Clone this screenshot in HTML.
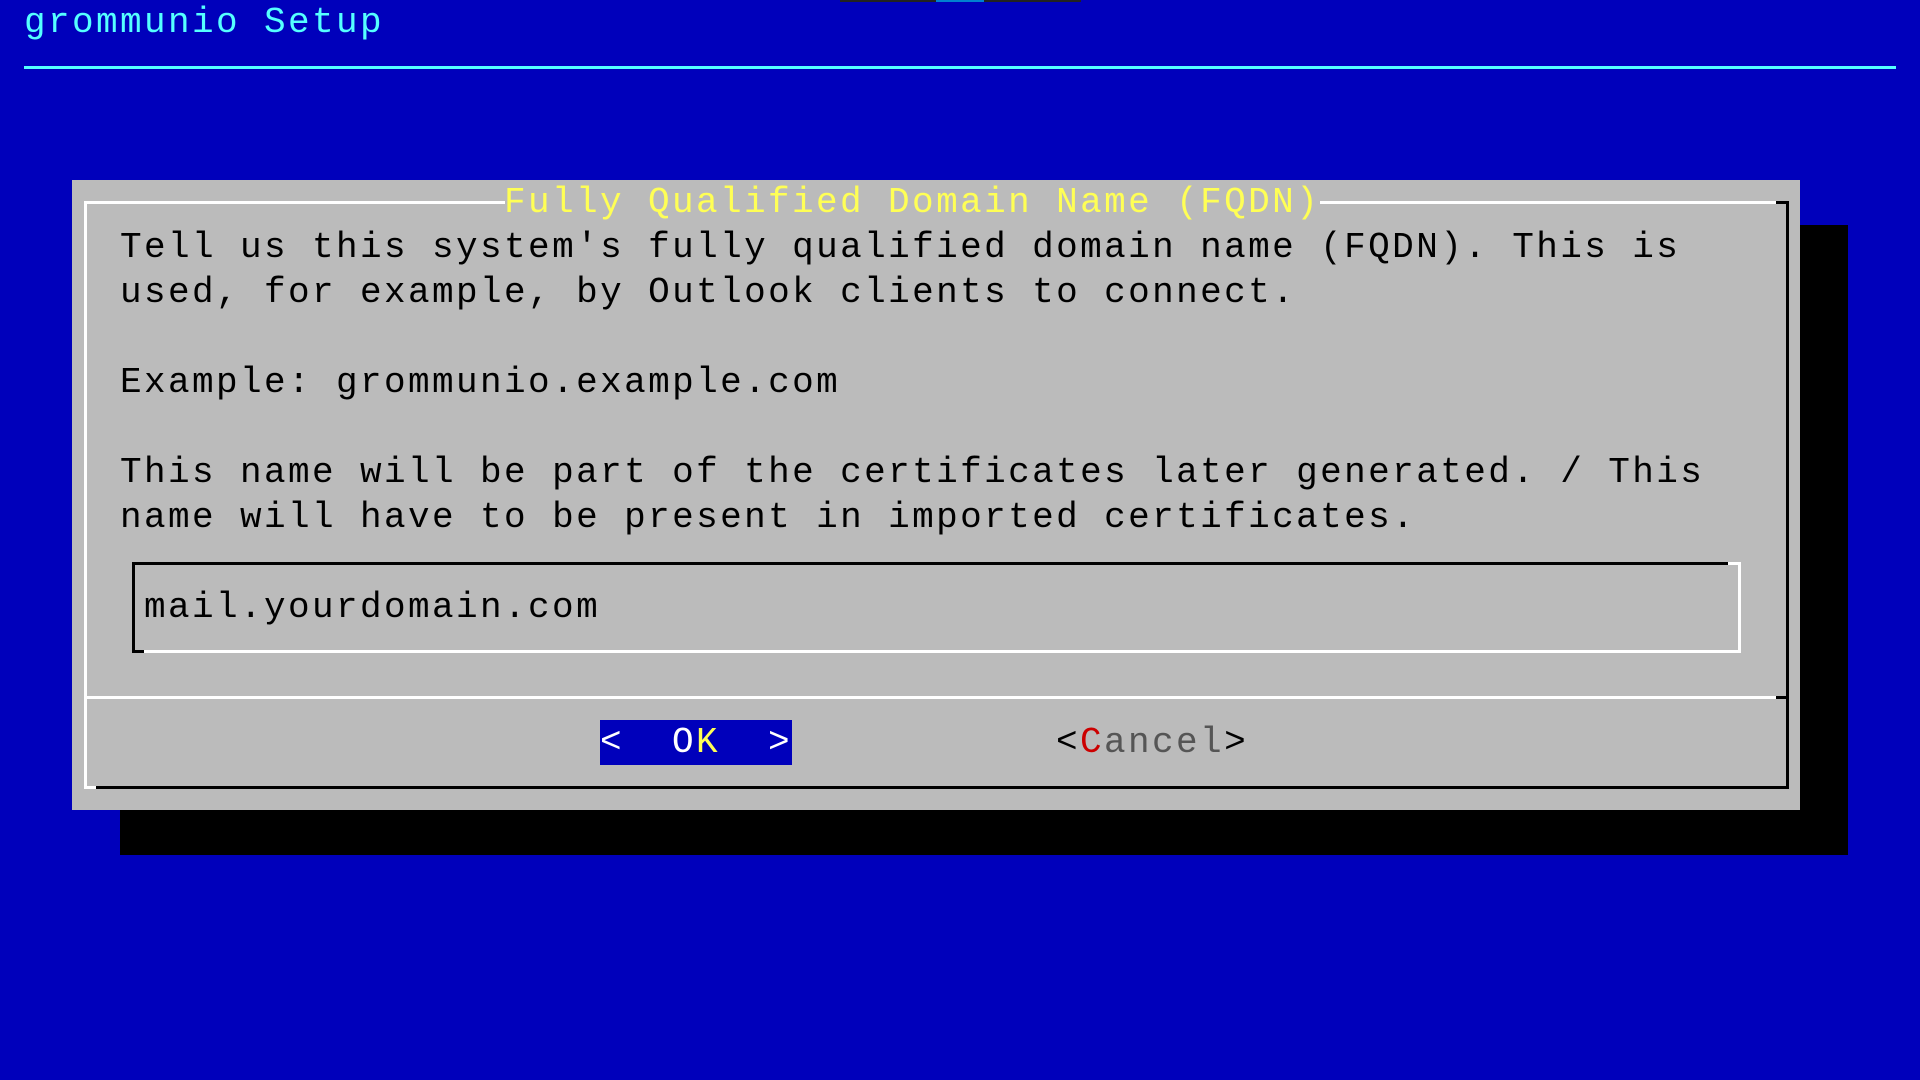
<!DOCTYPE html>
<html><head><meta charset="utf-8"><style>
html,body{margin:0;padding:0;width:1920px;height:1080px;overflow:hidden;background:#0000bb;}
.a{position:absolute;}
.t{position:absolute;font-family:"Liberation Mono",monospace;font-size:36px;letter-spacing:2.4px;line-height:45px;height:45px;white-space:pre;color:#000;}
</style></head><body>
<!-- top artifact -->
<div class="a" style="left:840px;top:0;width:241px;height:2px;background:#222;"></div>
<div class="a" style="left:936px;top:0;width:48px;height:2px;background:#0080d0;"></div>
<!-- header -->
<div class="t" style="left:24px;top:0;color:#55ffff;">grommunio Setup</div>
<div class="a" style="left:24px;top:66px;width:1872px;height:3px;background:#55ffff;"></div>
<!-- shadow -->
<div class="a" style="left:120px;top:225px;width:1728px;height:630px;background:#000;"></div>
<!-- dialog -->
<div class="a" style="left:72px;top:180px;width:1728px;height:630px;background:#bbbbbb;"></div>
<!-- outer box border -->
<div class="a" style="left:84px;top:201px;width:421px;height:3px;background:#fff;"></div>
<div class="a" style="left:1320px;top:201px;width:456px;height:3px;background:#fff;"></div>
<div class="a" style="left:1776px;top:201px;width:13px;height:3px;background:#000;"></div>
<div class="a" style="left:84px;top:201px;width:3px;height:586px;background:#fff;"></div>
<div class="a" style="left:1786px;top:201px;width:3px;height:586px;background:#000;"></div>
<div class="a" style="left:96px;top:786px;width:1693px;height:3px;background:#000;"></div>
<div class="a" style="left:84px;top:786px;width:12px;height:3px;background:#fff;"></div>
<!-- divider -->
<div class="a" style="left:84px;top:696px;width:1692px;height:3px;background:#fff;"></div>
<div class="a" style="left:1776px;top:696px;width:13px;height:3px;background:#000;"></div>
<!-- title -->
<div class="t" style="left:504px;top:180px;color:#ffff55;">Fully Qualified Domain Name (FQDN)</div>
<!-- body text -->
<div class="t" style="left:120px;top:225px;">Tell us this system's fully qualified domain name (FQDN). This is</div>
<div class="t" style="left:120px;top:270px;">used, for example, by Outlook clients to connect.</div>
<div class="t" style="left:120px;top:360px;">Example: grommunio.example.com</div>
<div class="t" style="left:120px;top:450px;">This name will be part of the certificates later generated. / This</div>
<div class="t" style="left:120px;top:495px;">name will have to be present in imported certificates.</div>
<!-- input box -->
<div class="a" style="left:132px;top:562px;width:1596px;height:3px;background:#000;"></div>
<div class="a" style="left:1728px;top:562px;width:13px;height:3px;background:#fff;"></div>
<div class="a" style="left:132px;top:562px;width:3px;height:90px;background:#000;"></div>
<div class="a" style="left:1738px;top:562px;width:3px;height:91px;background:#fff;"></div>
<div class="a" style="left:144px;top:650px;width:1597px;height:3px;background:#fff;"></div>
<div class="a" style="left:132px;top:650px;width:12px;height:3px;background:#000;"></div>
<div class="t" style="left:144px;top:585px;">mail.yourdomain.com</div>
<!-- buttons -->
<div class="a" style="left:600px;top:720px;width:192px;height:45px;background:#0000bb;"></div>
<div class="t" style="left:600px;top:720px;color:#fff;">&lt;  O<span style="color:#ffff55">K</span>  &gt;</div>
<div class="t" style="left:1056px;top:720px;color:#555;"><span style="color:#000">&lt;</span><span style="color:#cc0000">C</span>ancel<span style="color:#000">&gt;</span></div>
</body></html>
